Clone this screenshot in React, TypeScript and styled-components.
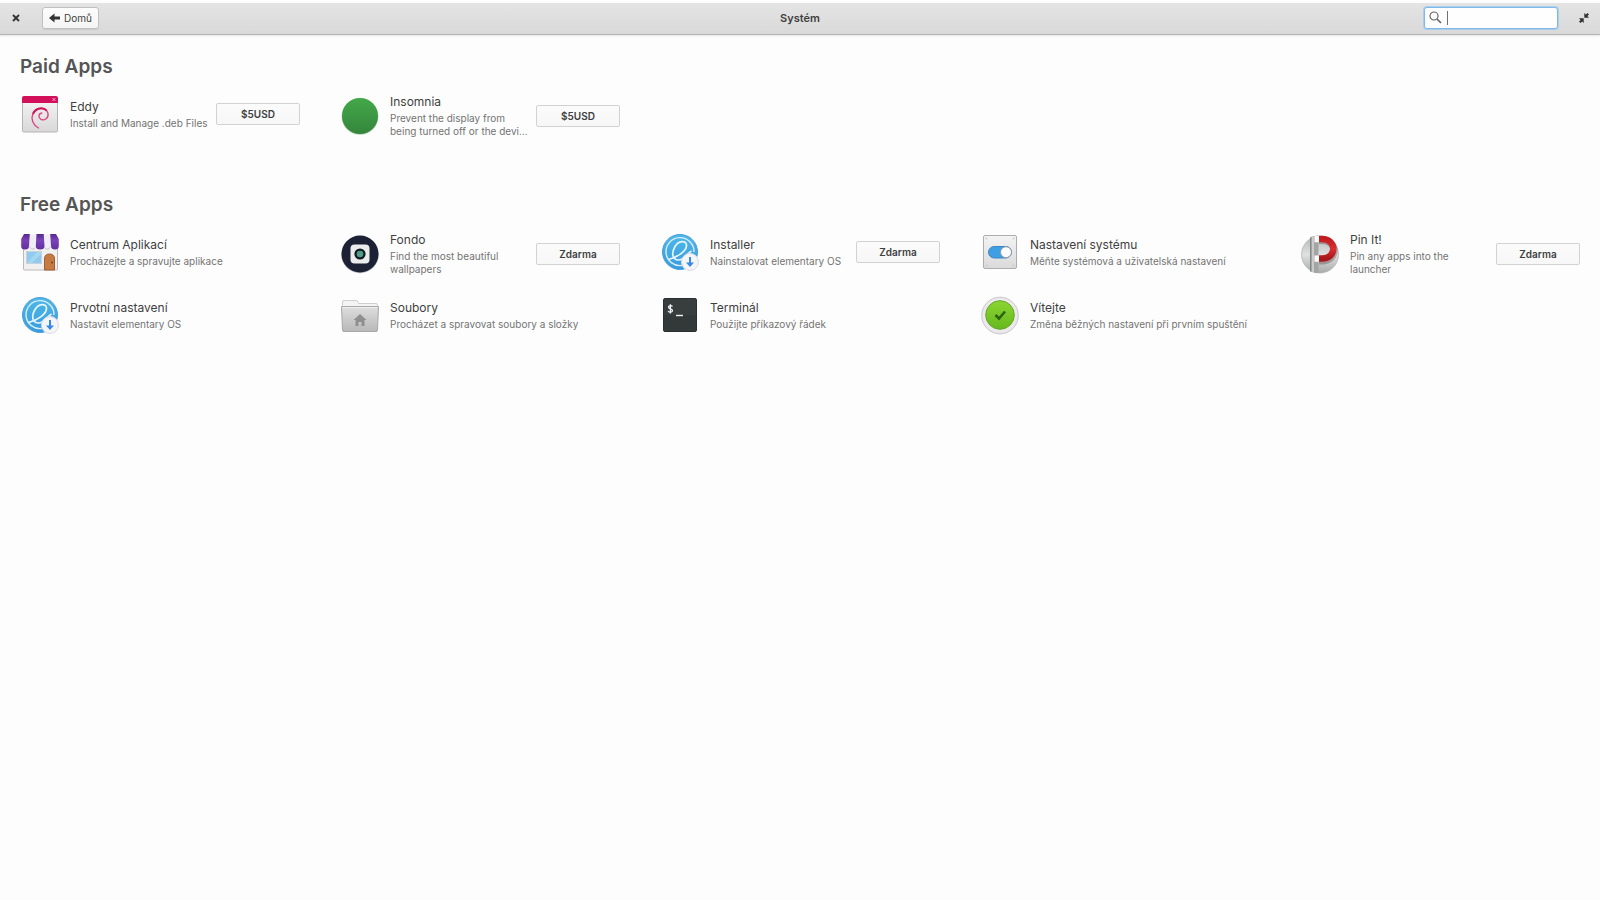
import React from "react";
import styled, { createGlobalStyle } from "styled-components";

const GlobalStyle = createGlobalStyle`
  * { box-sizing: border-box; }
  body {
    margin: 0;
    background: #fdfdfd;
    color: #3f3f3f;
    font-family: Inter, "Noto Sans", sans-serif;
  }
  button, input { font: inherit; color: inherit; }
`;

const Window = styled.div`
  display: flex;
  flex-direction: column;
  min-height: 100vh;
  padding-top: 3px;
`;

const HeaderBar = styled.header`
  display: grid;
  grid-template-columns: 1fr auto 1fr;
  align-items: center;
  height: 32px;
  padding: 0 8px 2px;
  background: linear-gradient(#e4e4e4, #d9d9d9);
  border-bottom: 1px solid #b4b4b4;
  box-shadow: 0 1px 2px rgba(0, 0, 0, 0.1);
`;

const HeaderSide = styled.div<{ $end?: boolean }>`
  display: flex;
  align-items: center;
  justify-content: ${(p) => (p.$end ? "flex-end" : "flex-start")};
  gap: 18px;
`;

const WindowTitle = styled.h1`
  margin: 0;
  font-size: 11px;
  line-height: 16px;
  font-weight: 600;
`;

const IconButton = styled.button`
  display: flex;
  align-items: center;
  justify-content: center;
  width: 16px;
  height: 22px;
  padding: 0;
  border: 0;
  background: none;
`;

const BackButton = styled.button`
  display: flex;
  align-items: center;
  gap: 4px;
  height: 22px;
  padding: 0 6px;
  border: 1px solid #c0c0c0;
  border-radius: 3px;
  background: linear-gradient(#fcfcfc, #f5f5f5);
  box-shadow: 0 1px 1px rgba(0, 0, 0, 0.08);
  font-size: 10px;
  line-height: 16px;
`;

const SearchBox = styled.label`
  display: flex;
  align-items: center;
  gap: 5px;
  width: 134px;
  height: 22px;
  padding: 0 4px;
  border: 1px solid #7fb9ec;
  border-radius: 3px;
  background: #fefefe;
  box-shadow: 0 0 0 1px rgba(140, 195, 240, 0.6);
`;

const SearchInput = styled.input`
  flex: 1;
  min-width: 0;
  height: 14px;
  padding: 0;
  border: 0;
  border-left: 1px solid #707070;
  outline: 0;
  background: none;
  font-size: 10px;
`;

const Content = styled.main`
  display: flex;
  flex-direction: column;
  gap: 54px;
  padding: 20px;
`;

const Section = styled.section`
  display: flex;
  flex-direction: column;
  gap: 13px;
`;

const SectionTitle = styled.h2`
  margin: 0;
  font-size: 19px;
  line-height: 24px;
  font-weight: 600;
  color: #555;
`;

const AppGrid = styled.div`
  display: grid;
  grid-template-columns: repeat(5, minmax(0, 1fr));
  align-items: start;
  gap: 16px 40px;
`;

const AppItem = styled.article`
  display: flex;
  align-items: center;
  min-height: 43px;
`;

const AppIcon = styled.svg`
  flex: none;
  width: 40px;
  height: 40px;
`;

const AppText = styled.div`
  flex: 1;
  min-width: 0;
  margin-left: 10px;
  padding-bottom: 1px;
`;

const AppName = styled.h3`
  margin: 0;
  font-size: 12px;
  line-height: 20px;
  font-weight: 400;
  white-space: nowrap;
`;

const AppSummary = styled.p<{ $oneLine: boolean }>`
  margin: 0;
  font-size: 10px;
  line-height: 13px;
  color: #747474;
  white-space: ${(p) => (p.$oneLine ? "nowrap" : "normal")};
`;

const PriceButton = styled.button`
  flex: none;
  width: 84px;
  height: 22px;
  margin-left: 6px;
  padding: 0;
  border: 1px solid #d2d2d2;
  border-radius: 2px;
  background: linear-gradient(#fbfbfb, #f7f7f7);
  font-size: 10px;
  line-height: 16px;
  font-weight: 600;
`;

const EddyIcon = () => (
  <AppIcon viewBox="0 0 40 40">
    <defs>
      <linearGradient id="eddy" x1="0" y1="0" x2="0" y2="1">
        <stop offset="0" stopColor="#f6f6f6" />
        <stop offset="1" stopColor="#d8d8d8" />
      </linearGradient>
    </defs>
    <rect x="2.5" y="3" width="35" height="35" rx="1.5" fill="url(#eddy)" stroke="#b4b4b4" />
    <path d="M2 9V4q0-2 2-2h32q2 0 2 2v5z" fill="#d3105a" />
    <path d="m32.6 4.200 2.600 2.600m0-2.600-2.600 2.600" stroke="#fbd" strokeWidth="1" />
    <path d="M18.500 34C13 31 10.600 25 13 19.500 16 13 26.500 12.500 28 19.500c.8 4.500-3.500 7.500-7 5.800-3-1.600-2.600-5.800.8-6.300" fill="none" stroke="#d94a80" strokeWidth="1.400" strokeLinecap="round" />
    <path d="M13 20c2.500-6 10-7.500 13.600-3.400" fill="none" stroke="#d01557" strokeWidth="2" />
  </AppIcon>
);

const InsomniaIcon = () => (
  <AppIcon viewBox="0 0 40 40">
    <defs>
      <linearGradient id="insomnia" x1="0" y1="0" x2="0" y2="1">
        <stop offset="0" stopColor="#43a94a" />
        <stop offset="1" stopColor="#35853b" />
      </linearGradient>
    </defs>
    <circle cx="20" cy="20.500" r="18.500" fill="#bcd9be" />
    <circle cx="20" cy="20" r="18" fill="url(#insomnia)" />
  </AppIcon>
);

const StoreIcon = () => (
  <AppIcon viewBox="0 0 40 40">
    <defs>
      <linearGradient id="awning" x1="0" y1="0" x2="0" y2="1">
        <stop offset="0" stopColor="#55298c" />
        <stop offset=".4" stopColor="#7a42b6" />
        <stop offset="1" stopColor="#6330a0" />
      </linearGradient>
    </defs>
    <rect x="3.500" y="12" width="34" height="26" rx="1" fill="#f1f0ef" stroke="#bbb9bb" />
    <rect x="6.500" y="19.500" width="15" height="12" fill="#8fcbee" stroke="#c8d2dc" />
    <path d="m7 31 10-11h4v2l-9 9z" fill="#a6d6f2" />
    <path d="M24.500 38V27q0-5 5-5t5 5v11z" fill="#c87a43" stroke="#9c5e35" />
    <circle cx="32" cy="30.500" r="1" fill="#6c4329" />
    <path d="M9 2.500h22V14q0 3-3.500 3T24 14h-8q0 3-3.500 3T9 14z" fill="#f0edf4" />
    <path d="M9.500 15q3.500 4 6 .5M24.500 15.500q3 3.500 6-.5" fill="none" stroke="#c9c2d2" />
    <path d="M4 2h5.800L9 14q0 3.500-4 3.500T1.200 14V7zM16.500 2h7.200l.8 12q0 3.500-4.300 3.500T15.800 14zM30.200 2H36l2.800 5v7q0 3.500-3.800 3.500T31 14z" fill="url(#awning)" />
  </AppIcon>
);

const InstallerIcon = () => (
  <AppIcon viewBox="0 0 40 40">
    <defs>
      <linearGradient id="installer" x1="0" y1="0" x2="0" y2="1">
        <stop offset="0" stopColor="#50b8e9" />
        <stop offset="1" stopColor="#379bdd" />
      </linearGradient>
    </defs>
    <circle cx="20" cy="20" r="17.500" fill="url(#installer)" stroke="#4a9fd8" />
    <path d="M34 20A14 14 0 1 0 22 33.500" fill="none" stroke="#d8eefa" strokeWidth="1.400" />
    <path d="M8.500 27.500c9-2.500 18.500-8.500 18-14.500-.5-5-8-4.500-11.500 1.500-4 7-2.500 13.500 3.500 13.500 6 0 8-6.500 13-9" fill="none" stroke="#e7f6fd" strokeWidth="1.700" />
    <circle cx="30" cy="30" r="8.500" fill="#f5f5f7" stroke="#dcdce2" />
    <path d="M30 25v7" stroke="#3689e6" strokeWidth="2" />
    <path d="M26 30.500h8l-4 4.500z" fill="#3689e6" />
  </AppIcon>
);

const FondoIcon = () => (
  <AppIcon viewBox="0 0 40 40">
    <circle cx="20" cy="20.500" r="18.800" fill="#bfc1c9" />
    <circle cx="20" cy="20" r="18.500" fill="#1c2136" />
    <rect x="10.500" y="10.500" width="19" height="19" rx="4" fill="#ececec" />
    <circle cx="20" cy="20" r="5.600" fill="#101a22" />
    <circle cx="20" cy="20" r="3.300" fill="#529b86" />
  </AppIcon>
);

const SettingsIcon = () => (
  <AppIcon viewBox="0 0 40 40">
    <defs>
      <linearGradient id="settings" x1="0" y1="0" x2="0" y2="1">
        <stop offset="0" stopColor="#f4f4f4" />
        <stop offset="1" stopColor="#dadada" />
      </linearGradient>
    </defs>
    <rect x="3.500" y="3.500" width="33" height="33" rx="1.500" fill="url(#settings)" stroke="#adadad" />
    <g fill="#cacaca">
      <circle cx="6.500" cy="6.500" r="1" /><circle cx="33.500" cy="6.500" r="1" />
      <circle cx="6.500" cy="33.500" r="1" /><circle cx="33.500" cy="33.500" r="1" />
    </g>
    <rect x="8.500" y="14.500" width="23" height="11.500" rx="5.750" fill="#3f9fe4" stroke="#3a87c4" />
    <circle cx="26" cy="20.200" r="5.500" fill="#fcfcfc" stroke="#8e9aa5" />
  </AppIcon>
);

const PinIcon = () => (
  <AppIcon viewBox="0 0 40 40">
    <defs>
      <linearGradient id="ball" x1="0" y1="0" x2="0" y2="1">
        <stop offset="0" stopColor="#b4b6b5" />
        <stop offset=".5" stopColor="#dfe0e0" />
        <stop offset="1" stopColor="#a9abaa" />
      </linearGradient>
      <linearGradient id="magnet" x1="0" y1="0" x2="0" y2="1">
        <stop offset="0" stopColor="#c01d20" />
        <stop offset=".5" stopColor="#dc2e30" />
        <stop offset="1" stopColor="#a8181b" />
      </linearGradient>
    </defs>
    <circle cx="20" cy="20.500" r="18.500" fill="url(#ball)" stroke="#a2a4a3" strokeWidth=".6" />
    <path d="M10.500 3q4-1.500 8-1.500v37.500q-4 0-8-1.500z" fill="#a3a5a4" />
    <path d="M13 3v35" stroke="#c9cac9" strokeWidth="2" />
    <path d="M10.500 3.500v34" stroke="#858786" strokeWidth="1" />
    <path d="M19 6.500h3C38.500 6.500 38 27 22 27h-3" fill="none" stroke="#3c1f1f" strokeWidth="7" opacity=".3" />
    <path d="M19 5h3C37 5 37 24.500 22 24.500h-3" fill="none" stroke="url(#magnet)" strokeWidth="6.500" />
    <path d="M14.500 2H19v6.200h-4.500zM14.500 21.500H19v6.200h-4.500z" fill="#fafafa" />
  </AppIcon>
);

const FilesIcon = () => (
  <AppIcon viewBox="0 0 40 40">
    <defs>
      <linearGradient id="files" x1="0" y1="0" x2="0" y2="1">
        <stop offset="0" stopColor="#dedede" />
        <stop offset="1" stopColor="#b8b8b8" />
      </linearGradient>
    </defs>
    <path d="M2.500 12V7q0-1.500 1.500-1.500h12q1.500 0 2 1.500l.5 1.500H36q1.500 0 1.500 1.500v4z" fill="#f4f4f4" stroke="#cfcfcf" />
    <path d="M1.500 11.500h37L37.500 35q0 1.500-1.500 1.500H4q-1.500 0-1.500-1.500z" fill="url(#files)" stroke="#a8a8a8" />
    <path d="M2.500 12.500h35" stroke="#f0f0f0" />
    <path d="m20 19 6.500 6h-2v6h-3v-4h-3v4h-3v-6h-2z" fill="#8f8f8f" />
  </AppIcon>
);

const TerminalIcon = () => (
  <AppIcon viewBox="0 0 40 40">
    <rect x="3.500" y="3.500" width="33" height="33" rx="1.500" fill="#383d3e" stroke="#2b2f30" />
    <path d="M4 20h32v15.500H4z" fill="#333838" />
    <path d="M12.500 11.500c-1-1.500-4-1.200-4 .6 0 2.300 4 1.100 4 3.500 0 1.900-3.200 2.200-4.400.5M10.400 9.200v9.200" fill="none" stroke="#f2f2f2" strokeWidth="1.300" />
    <path d="M16 20.500h7" stroke="#f2f2f2" strokeWidth="1.400" />
  </AppIcon>
);

const WelcomeIcon = () => (
  <AppIcon viewBox="0 0 40 40">
    <defs>
      <linearGradient id="welcome" x1="0" y1="0" x2="0" y2="1">
        <stop offset="0" stopColor="#8bd532" />
        <stop offset="1" stopColor="#66b81e" />
      </linearGradient>
    </defs>
    <circle cx="20" cy="20.500" r="18.300" fill="#ebe9ec" stroke="#c9c7ca" />
    <circle cx="20" cy="20" r="14.300" fill="url(#welcome)" stroke="#63a828" />
    <path d="m15.500 20 3.500 3.500 6-7" fill="none" stroke="#2c6412" strokeWidth="2.600" />
  </AppIcon>
);

type App = { name: string; summary: string; price?: string; icon: React.ReactNode };

const paidApps: App[] = [
  { name: "Eddy", summary: "Install and Manage .deb Files", price: "$5USD", icon: <EddyIcon /> },
  {
    name: "Insomnia",
    summary: "Prevent the display from being turned off or the devi…",
    price: "$5USD",
    icon: <InsomniaIcon />,
  },
];

const freeApps: App[] = [
  { name: "Centrum Aplikací", summary: "Procházejte a spravujte aplikace", icon: <StoreIcon /> },
  { name: "Fondo", summary: "Find the most beautiful wallpapers", price: "Zdarma", icon: <FondoIcon /> },
  { name: "Installer", summary: "Nainstalovat elementary OS", price: "Zdarma", icon: <InstallerIcon /> },
  { name: "Nastavení systému", summary: "Měňte systémová a uživatelská nastavení", icon: <SettingsIcon /> },
  { name: "Pin It!", summary: "Pin any apps into the launcher", price: "Zdarma", icon: <PinIcon /> },
  { name: "Prvotní nastavení", summary: "Nastavit elementary OS", icon: <InstallerIcon /> },
  { name: "Soubory", summary: "Procházet a spravovat soubory a složky", icon: <FilesIcon /> },
  { name: "Terminál", summary: "Použijte příkazový řádek", icon: <TerminalIcon /> },
  { name: "Vítejte", summary: "Změna běžných nastavení při prvním spuštění", icon: <WelcomeIcon /> },
];

const AppSection = ({ title, apps }: { title: string; apps: App[] }) => (
  <Section>
    <SectionTitle>{title}</SectionTitle>
    <AppGrid>
      {apps.map((app) => (
        <AppItem key={app.name}>
          {app.icon}
          <AppText>
            <AppName>{app.name}</AppName>
            <AppSummary $oneLine={!app.price}>{app.summary}</AppSummary>
          </AppText>
          {app.price && <PriceButton type="button">{app.price}</PriceButton>}
        </AppItem>
      ))}
    </AppGrid>
  </Section>
);

export default function App() {
  return (
    <>
      <GlobalStyle />
      <Window>
        <HeaderBar>
          <HeaderSide>
            <IconButton type="button" aria-label="Zavřít">
              <svg width="8" height="8" viewBox="0 0 8 8">
                <path d="m1 1 6 6M7 1 1 7" stroke="#333" strokeWidth="1.900" />
              </svg>
            </IconButton>
            <BackButton type="button">
              <svg width="11" height="10" viewBox="0 0 11 10">
                <path d="M5.500 .5v3H11v3H5.500v3L0 5z" fill="#333" />
              </svg>
              Domů
            </BackButton>
          </HeaderSide>
          <WindowTitle>Systém</WindowTitle>
          <HeaderSide $end>
            <SearchBox>
              <svg width="13" height="13" viewBox="0 0 13 13">
                <circle cx="5" cy="5" r="4" fill="none" stroke="#666" strokeWidth="1.200" />
                <path d="m8 8 4 4" stroke="#666" strokeWidth="1.700" />
              </svg>
              <SearchInput type="text" aria-label="Hledat" />
            </SearchBox>
            <IconButton type="button" aria-label="Obnovit velikost">
              <svg width="10" height="10" viewBox="0 0 10 10">
                <path d="M5.300 0v4.700H10L8.400 3.100 10 1.500 8.500 0 6.900 1.600zM4.700 10V5.300H0l1.600 1.600L0 8.500 1.500 10l1.600-1.600z" fill="#333" />
              </svg>
            </IconButton>
          </HeaderSide>
        </HeaderBar>
        <Content>
          <AppSection title="Paid Apps" apps={paidApps} />
          <AppSection title="Free Apps" apps={freeApps} />
        </Content>
      </Window>
    </>
  );
}
